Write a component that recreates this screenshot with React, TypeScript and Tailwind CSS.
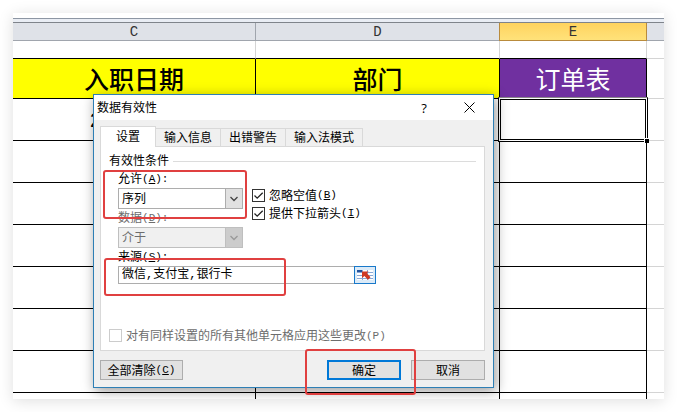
import { ReactNode } from 'react';

const rows = [1, 2, 3, 4, 5, 6, 7];

const Key = ({ children }: { children: string }) => (
  <span className="font-['Liberation_Mono',monospace] text-[11px] leading-none">
    (<u>{children}</u>)
  </span>
);

const FieldLabel = ({
  id,
  label,
  accessKey,
  muted,
}: {
  id: string;
  label: string;
  accessKey: string;
  muted?: boolean;
}) => (
  <label
    htmlFor={id}
    className={`flex h-[18px] items-center ${muted ? 'text-[#6d6d6d]' : ''}`}
  >
    {label}
    <Key>{accessKey}</Key>
    <span className="font-['Liberation_Mono',monospace] text-[11px]">:</span>
  </label>
);

const Chevron = () => (
  <svg
    className="h-2 w-2"
    viewBox="0 0 8 8"
    fill="none"
    stroke="currentColor"
    strokeWidth="1.3"
  >
    <path d="M0.5 2 4 5.5 7.5 2" />
  </svg>
);

const Sheet = () => (
  <table className="w-full table-fixed border-separate border-spacing-0">
    <colgroup>
      <col />
      <col />
      <col className="w-[148px]" />
      <col className="w-[17px]" />
    </colgroup>
    <thead>
      <tr className="h-[18px] bg-[#dfe2e8] font-['Liberation_Mono',monospace] text-sm leading-4 text-[#333]">
        <th className="border-r border-b border-[#a0a5ad] p-0 pt-px font-normal">C</th>
        <th className="border-b border-[#a0a5ad] p-0 pt-px font-normal">D</th>
        <th className="border border-t-0 border-[#b98b3c] bg-linear-to-b from-[#ffd35e] to-[#ffe27a] p-0 pt-px font-normal">
          E
        </th>
        <th className="border-b border-[#a0a5ad] p-0" />
      </tr>
    </thead>
    <tbody>
      <tr className="h-[18px]">
        <td className="border-r border-b border-r-[#d4d4d4] border-b-black p-0" />
        <td className="border-b border-black p-0" />
        <td className="border-x border-b border-x-[#d4d4d4] border-b-black p-0" />
        <td className="border-b border-[#d4d4d4] p-0" />
      </tr>
      <tr className="h-10 text-center text-[25px] leading-9 font-medium">
        <td className="border-r border-b border-black bg-[#ffff00] p-0 pt-[3px]">
          入职日期
        </td>
        <td className="border-b border-black bg-[#ffff00] p-0 pt-[3px]">部门</td>
        <td className="border-x border-b border-black bg-[#7030a0] p-0 pt-[3px] font-normal text-white">
          订单表
        </td>
        <td className="border-b border-[#d4d4d4] p-0" />
      </tr>
      {rows.map((row) => (
        <tr key={row} className="h-[42px]">
          <td className="border-r border-b border-black p-0 pl-[77px] text-xl">
            {row === 1 && '2'}
          </td>
          <td className="border-b border-black p-0" />
          <td className="relative border-x border-b border-black p-0">
            {row === 1 && (
              <div className="absolute -inset-[2px] border border-black border-t-[#888] bg-white p-px">
                <div className="h-full border border-black" />
                <span className="absolute -right-[2px] -bottom-[2px] size-[5px] border-t border-l border-white bg-black" />
              </div>
            )}
          </td>
          <td className="border-b border-[#d4d4d4] p-0" />
        </tr>
      ))}
      <tr className="h-[6px]">
        <td className="border-r border-black p-0" />
        <td className="p-0" />
        <td className="border-x border-black p-0" />
        <td className="p-0" />
      </tr>
    </tbody>
  </table>
);

const Tab = ({ children }: { children: ReactNode }) => (
  <button
    type="button"
    role="tab"
    aria-selected={false}
    className="h-[18px] border-t border-r border-[#d9d9d9] px-2 pt-px leading-4"
  >
    {children}
  </button>
);

const Check = ({
  id,
  label,
  accessKey,
}: {
  id: string;
  label: string;
  accessKey: string;
}) => (
  <div className="flex h-[18px] items-center gap-1">
    <span className="relative flex">
      <input
        id={id}
        type="checkbox"
        defaultChecked
        className="size-[13px] appearance-none border border-[#333] bg-white"
      />
      <svg
        className="pointer-events-none absolute inset-0 size-[13px]"
        viewBox="0 0 13 13"
        fill="none"
        stroke="#222"
        strokeWidth="1.3"
      >
        <path d="M2.5 6.5 5.2 9.2 10.7 3.7" />
      </svg>
    </span>
    <label htmlFor={id} className="flex items-center pt-px">
      {label}
      <Key>{accessKey}</Key>
    </label>
  </div>
);

const ValidationDialog = () => (
  <div
    role="dialog"
    aria-labelledby="title"
    className="absolute top-[81px] left-20 flex w-[401px] flex-col border border-[#2e7fb5] bg-[#f0f0f0] text-xs leading-[18px] shadow-[2px_3px_12px_rgba(0,0,0,0.4)]"
  >
    <div className="flex h-[25px] items-center bg-white pr-[18px] pl-[3px]">
      <h1 id="title" className="flex-1">
        数据有效性
      </h1>
      <button
        type="button"
        className="mr-[34px] w-3 font-['Open_Sans',sans-serif] text-[13px]"
      >
        ?
      </button>
      <button type="button" aria-label="关闭">
        <svg className="size-[11px]" viewBox="0 0 11 11" stroke="#000">
          <path d="M.5.5 10.5 10.5M10.5.5.5 10.5" />
        </svg>
      </button>
    </div>

    <div className="pt-[6px] pr-2 pb-[7px] pl-[6px]">
      <div role="tablist" className="flex items-end">
        <button
          type="button"
          role="tab"
          aria-selected={true}
          className="relative -mb-px h-[21px] w-14 border border-b-0 border-[#d9d9d9] bg-white"
        >
          设置
        </button>
        <Tab>输入信息</Tab>
        <Tab>出错警告</Tab>
        <Tab>输入法模式</Tab>
      </div>

      <div className="flex h-[205px] flex-col border border-[#d9d9d9] bg-white px-2 pt-[5px] pb-[5px]">
        <div className="flex items-center gap-1">
          <span>有效性条件</span>
          <span className="h-px flex-1 bg-[#dcdcdc]" />
        </div>

        <div className="flex pl-[9px]">
          <div className="flex w-[125px] flex-col">
            <FieldLabel id="allow" label="允许" accessKey="A" />
            <div className="relative">
              <select
                id="allow"
                className="block h-[21px] w-full appearance-none border border-[#adadad] bg-white pl-[3px]"
              >
                <option>序列</option>
              </select>
              <span className="pointer-events-none absolute inset-y-0 right-0 flex w-[18px] items-center justify-center border border-[#adadad] bg-[#e1e1e1] text-[#444]">
                <Chevron />
              </span>
            </div>
            <FieldLabel id="data" label="数据" accessKey="D" muted />
            <div className="relative">
              <select
                id="data"
                disabled
                className="block h-[21px] w-full appearance-none border border-[#bfbfbf] bg-[#f0f0f0] pl-[3px] text-[#6d6d6d] opacity-100"
              >
                <option>介于</option>
              </select>
              <span className="pointer-events-none absolute inset-y-0 right-0 flex w-[18px] items-center justify-center border border-[#bfbfbf] bg-[#cccccc] text-[#999]">
                <Chevron />
              </span>
            </div>
          </div>
          <div className="pt-4 pl-[9px]">
            <Check id="blank" label="忽略空值" accessKey="B" />
            <Check id="arrow" label="提供下拉箭头" accessKey="I" />
          </div>
        </div>

        <div className="flex flex-col pl-[9px]">
          <FieldLabel id="source" label="来源" accessKey="S" />
          <div className="flex">
            <input
              id="source"
              type="text"
              defaultValue="微信,支付宝,银行卡"
              className="h-[18px] w-[236px] border border-r-0 border-[#adadad] bg-white pl-[3px] font-['Liberation_Mono','Noto_Sans_CJK_SC',monospace]"
            />
            <button
              type="button"
              aria-label="选择区域"
              className="flex h-[18px] w-[22px] items-center justify-center border border-[#1979ca] bg-[#dcebf8]"
            >
              <svg className="h-3 w-4" viewBox="0 0 16 12">
                <path d="M0 1h16v10H0z" fill="#fff" />
                <path d="M0 1h6v2H0z" fill="#24539b" />
                <path
                  d="M0 3.5h16M0 6.5h16M0 9.5h16M5.5 1v10M10.5 1v10"
                  stroke="#8aa8d6"
                />
                <path
                  d="M5 2.500h6.500L10 4.200l3.500 4L11 10.800 7.400 7 5 9z"
                  fill="#cf3a24"
                />
              </svg>
            </button>
          </div>
        </div>

        <div className="mt-auto flex items-center gap-1 text-[#6d6d6d]">
          <input
            id="apply"
            type="checkbox"
            disabled
            className="size-[13px] appearance-none border border-[#cccccc] bg-white"
          />
          <label htmlFor="apply" className="flex items-center pt-px">
            对有同样设置的所有其他单元格应用这些更改
            <span className="font-['Liberation_Mono',monospace] text-[11px] leading-none">
              (P)
            </span>
          </label>
        </div>
      </div>

      <div className="mt-[9px] flex">
        <button
          type="button"
          className="mr-auto flex h-5 w-[83px] items-center justify-center border border-[#adadad] bg-[#e1e1e1] pt-px"
        >
          全部清除
          <Key>C</Key>
        </button>
        <button
          type="button"
          className="mr-[10px] h-5 w-[74px] border-2 border-[#0078d7] bg-[#e1e1e1] pt-px leading-4"
        >
          确定
        </button>
        <button
          type="button"
          className="h-5 w-[74px] border border-[#adadad] bg-[#e1e1e1] pt-px leading-4"
        >
          取消
        </button>
      </div>
    </div>
  </div>
);

const markClass =
  'pointer-events-none absolute rounded-[3px] border-2 border-[#e04040]';

export default function App() {
  return (
    <div className="p-[13px] font-['Liberation_Sans','Noto_Sans_CJK_SC',sans-serif] text-black">
      <main className="relative overflow-clip bg-white shadow-[0_2px_14px_rgba(0,0,0,0.13)]">
        <div className="h-[10px] border-b border-[#7f848b] pt-[5px]">
          <div className="h-full border-t border-[#8d96a3] bg-[#e9edf4]" />
        </div>
        <Sheet />
        <ValidationDialog />
        <div className={`${markClass} top-[157px] left-[90px] h-[49px] w-[144px]`} />
        <div className={`${markClass} top-[245px] left-[91px] h-[38px] w-[182px]`} />
        <div className={`${markClass} top-[336px] left-[292px] h-[46px] w-[111px]`} />
      </main>
    </div>
  );
}
